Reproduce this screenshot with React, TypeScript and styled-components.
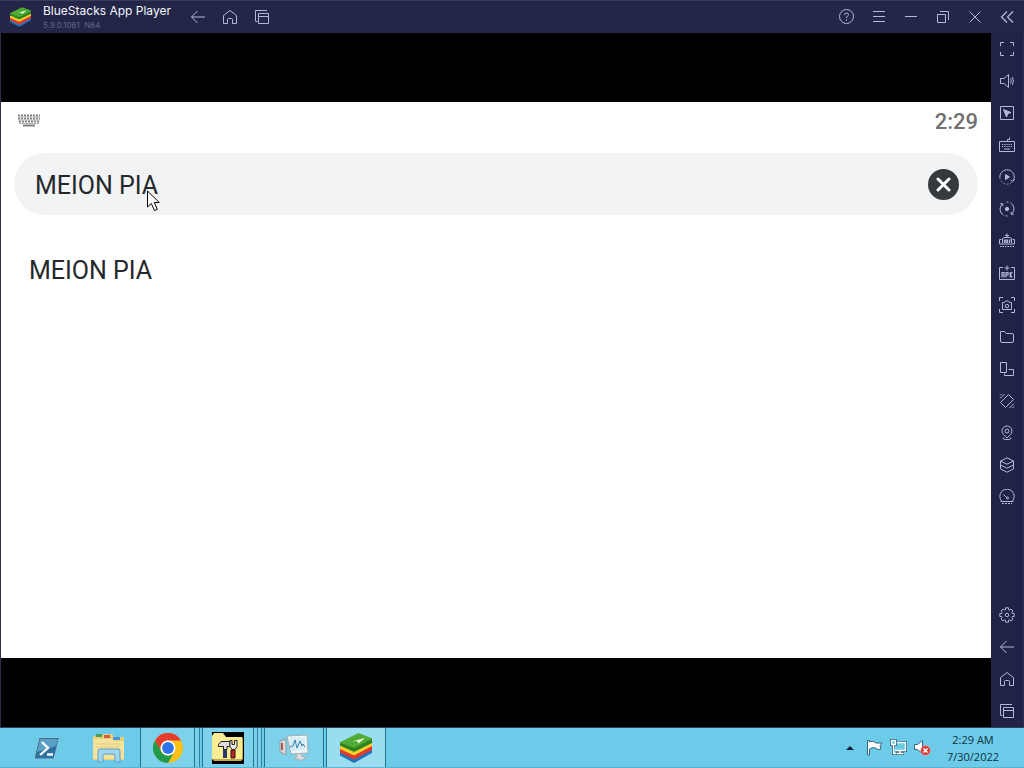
import React, { useState } from "react";
import styled, { createGlobalStyle } from "styled-components";

const GlobalStyle = createGlobalStyle`
  * { box-sizing: border-box; }
  html, body { margin: 0; background: #000; }
  button { font: inherit; color: inherit; background: none; border: 0; padding: 0; cursor: default; }
`;

const Screen = styled.div`
  display: flex;
  flex-direction: column;
  min-height: 100vh;
`;

const TitleBar = styled.header`
  display: flex;
  align-items: flex-start;
  height: 33px;
  padding: 0 1px 0 10px;
  background: #232647;
  border-top: 1px solid #373b5c;
  color: #b4b7da;
`;

const AppLogo = styled.span`
  display: flex;
  align-items: center;
  width: 33px;
  height: 32px;
`;

const AppName = styled.div`
  width: 139px;
  padding-top: 2px;
  font-family: Inter, "Open Sans", sans-serif;
  white-space: nowrap;
`;

const Name = styled.h1`
  margin: 0;
  font-size: 12px;
  font-weight: 400;
  line-height: 16px;
  color: #f4f5fc;
`;

const Version = styled.p`
  margin: 0;
  font-size: 8px;
  line-height: 12px;
  white-space: pre;
  color: #62668c;
`;

const Group = styled.nav<{ $end?: boolean }>`
  display: flex;
  margin-left: ${(p) => (p.$end ? "auto" : "0")};
`;

const IconButton = styled.button`
  display: flex;
  align-items: center;
  justify-content: center;
  width: 32px;
  height: 32px;
`;

const Body = styled.div`
  display: flex;
  flex: 1;
`;

const Player = styled.main`
  display: flex;
  flex: 1;
  flex-direction: column;
  padding: 69px 0;
  background: #000;
  border-left: 1px solid #2b2d40;
`;

const Android = styled.section`
  flex: 1;
  padding: 0 13px;
  background: #fff;
  font-family: Roboto, sans-serif;
  color: #25282b;
`;

const StatusBar = styled.div`
  display: flex;
  align-items: center;
  justify-content: space-between;
  height: 38px;
  padding-left: 4px;
`;

const Clock = styled.time`
  font-size: 22px;
  font-weight: 500;
  color: #707070;
`;

const SearchForm = styled.form`
  position: relative;
  display: flex;
  align-items: center;
  height: 62px;
  margin-top: 13px;
  padding: 0 19px 0 21px;
  border-radius: 31px;
  background: #f1f3f4;
`;

const SearchInput = styled.input`
  flex: 1;
  min-width: 0;
  padding: 4px 0 0;
  border: 0;
  outline: 0;
  background: none;
  font-family: inherit;
  font-size: 25px;
  line-height: 32px;
  color: inherit;
`;

const ClearButton = styled.button`
  display: flex;
  align-items: center;
  justify-content: center;
  width: 31px;
  height: 31px;
  border-radius: 50%;
  background: #353a3d;
`;

const Cursor = styled.svg`
  position: absolute;
  left: 133px;
  top: 37px;
  pointer-events: none;
`;

const Results = styled.ul`
  margin: 40px 0 0;
  padding: 0 15px;
  list-style: none;
`;

const Result = styled.button`
  font-size: 25px;
  line-height: 32px;
`;

const SideBar = styled.aside`
  display: flex;
  flex-direction: column;
  justify-content: space-between;
  width: 33px;
  background: #202347;
  border-right: 1px solid #2b2e55;
  color: #b4b7da;
`;

const TaskBar = styled.footer`
  display: flex;
  height: 41px;
  padding-left: 17px;
  background: #6bcbe9;
  border-top: 1px solid #27435c;
  border-bottom: 1px solid #5db3cd;
`;

const Task = styled.button<{ $width: number; $state?: "open" | "active" }>`
  display: flex;
  align-items: center;
  justify-content: center;
  width: ${(p) => p.$width}px;
  border: solid #23728f;
  border-width: ${(p) => (p.$state ? "0 1px" : "0")};
  background: ${(p) => (p.$state === "active" ? "#9bddf0" : p.$state === "open" ? "#7dd1eb" : "none")};
`;

const Stack = styled.span<{ $width: number }>`
  width: ${(p) => p.$width}px;
  border-right: 1px solid #2f7f9d;
  background: #78cfea;
`;

const Spacer = styled.span`
  width: 2px;
`;

const Tray = styled.div`
  display: flex;
  align-items: center;
  margin-left: auto;
  padding-right: 24px;
  color: #10303f;
`;

const TrayButton = styled.button`
  display: flex;
  align-items: center;
  justify-content: center;
  width: 24px;
  height: 24px;
`;

const DateTime = styled.div`
  width: 54px;
  margin-left: 12px;
  font-family: "Open Sans", "Noto Sans", sans-serif;
  font-size: 11px;
  line-height: 17px;
  text-align: center;
  white-space: nowrap;
`;

const LineSvg = styled.svg`
  display: block;
  fill: none;
  stroke: currentColor;
  stroke-width: 1;
`;

const Line = ({ children }: { children: React.ReactNode }) => (
  <LineSvg width="16" height="16" viewBox="0 0 16 16" aria-hidden="true">
    {children}
  </LineSvg>
);

const icons: Record<string, React.ReactNode> = {
  back: <path d="M15 8H1.500M7.500 2l-6 6 6 6" />,
  home: <path d="M1.500 6.500 8 1.500l6.500 5V14.500h-4V10.500q0-1-1-1h-3q-1 0-1 1V14.500h-4z" />,
  recent: (
    <>
      <path d="M1.500 12V1.500H13M3.500 12.500H1.500" />
      <path d="M4.500 4.500h10v10h-10zM4.500 7.500h10" />
    </>
  ),
  help: (
    <>
      <circle cx="7.500" cy="7.500" r="7" />
      <path d="M5.500 6q0-2 2-2t2 1.700c0 1.500-2 1.400-2 3.300M7.500 10.300v1.400" />
    </>
  ),
  menu: <path d="M2 2.500h12M2 7.500h12M2 12.500h12" />,
  minimize: <path d="M2 7.500h12" />,
  restore: <path d="M2.500 5.500h8v8h-8zM5 2.500h8.500V11" />,
  close: <path d="m2.500 2.500 11 11M13.500 2.500l-11 11" />,
  collapse: <path d="m8 2.500-5.500 5.500 5.500 5.500M14 2.500l-5.500 5.500 5.500 5.500" strokeWidth="1.300" />,
  fullscreen: <path d="M1.500 5V1.500H5M11 1.500h3.500V5M14.500 11v3.500H11M5 14.500H1.500V11" />,
  volume: (
    <>
      <path d="M1.500 5.500H5l4.500-4v13l-4.500-4H1.500z" />
      <path d="M11.500 5.500q1.500 2.500 0 5M13.300 4q2.300 4 0 8" />
    </>
  ),
  lock: (
    <>
      <path d="M1.500 1.500h13v13h-13z" />
      <path d="m4.500 4.500 7.500 3-3.200 1.200L7.500 12z" fill="currentColor" />
    </>
  ),
  keyboard: (
    <>
      <path d="M.500 4.500h15v10H.500zM8.500 4V2.500h2V.500" />
      <path d="M3 7.500h10M3 9.500h10" strokeDasharray="1.200 1" />
      <path d="M5 12h6" />
    </>
  ),
  macro: (
    <>
      <path d="M1 9.500A7.200 7.200 0 1 1 14 12" />
      <path d="M12.500 13.500A7.200 7.200 0 0 1 1.200 10.500" strokeDasharray="1.500 1.800" />
      <path d="M6.500 5.500 10.500 8l-4 2.500z" fill="currentColor" />
      <path d="M15.500 10 13.800 12.500 11.500 11" />
    </>
  ),
  sync: (
    <>
      <path d="M3.300 3A7 7 0 0 0 4.500 14.200M12.700 13A7 7 0 0 0 11.500 1.800" />
      <path d="M6.500 14.900h2M7.500 1.100h2" />
      <path d="M1.300 2.700h2.500v2.500M14.700 13.300h-2.500v-2.500" />
      <circle cx="8" cy="8" r="1.700" fill="currentColor" />
    </>
  ),
  memory: (
    <>
      <path d="M2.500 6.500H.500v4.500h15V6.500h-2M3.500 10V5.500L5 4.500h6l1.500 1V10M8 4V.500M6 2.500h4" />
      <path d="M5.500 10V7h1.500v3M8.500 6.500V10M10.500 10V7h1" strokeWidth="1.200" />
      <path d="M1 13.500h14" strokeDasharray="1.500 1" />
    </>
  ),
  apk: (
    <>
      <path d="M4 2.500H.500v12H3M12 2.500h3.500v12H13M8 .500v5M5.500 3H10.500M3 14.500h10" />
      <path d="M3 12.500v-5h2v5M3 10h2M7 12.500v-5h2v2.500H7M11.200 7v5.500M13.300 7.200l-2 2.800 2 2.500" strokeWidth="1.200" />
    </>
  ),
  screenshot: (
    <>
      <path d="M.500 4V.500H4M12 .500h3.500V4M15.500 12v3.500H12M4 15.500H.500V12" />
      <path d="M3.500 5.500h2l1-1.500h3l1 1.500h2v7h-9z" />
      <circle cx="8" cy="9" r="1.700" />
    </>
  ),
  folder: <path d="M1.500 2.500h4l2 2h5.500q1.500 0 1.500 1.500v6q0 1.500-1.500 1.500H3q-1.500 0-1.500-1.500z" />,
  rotate: <path d="M1.500 1.500h6v10h-6zM9.500 8.500h5v6h-9v-2" />,
  shake: (
    <>
      <path d="M9.500 1.500 14.500 6.500 6.500 14.500 1.500 9.500z" />
      <path d="M1 5.500 5.500 1M1 2.500 2.500 1M10.500 15l4.500-4.500M13.500 15l1.500-1.500" />
    </>
  ),
  location: (
    <>
      <path d="M8 13 4.500 9.500a5 5 0 1 1 7 0zM4.500 12.500q-2 2 3.500 2t3.500-2" />
      <circle cx="8" cy="6" r="2" />
    </>
  ),
  layers: (
    <path d="M8 .800 14.500 4 8 7.200 1.500 4zM1.500 4v8L8 15.200l6.500-3.200V4M1.500 8 8 11.200 14.500 8" />
  ),
  gauge: (
    <>
      <path d="M3 12.500A7.200 7.200 0 1 1 13 12.500M1.500 12.500h13M8 9 4.500 5.500" />
      <path d="M3 14.500h10" strokeDasharray="2 1" />
      <circle cx="8.500" cy="9" r="1" />
    </>
  ),
  settings: (
    <>
      <path d="M6.500.800h3v1.900l1.200.500L12 1.900 14.100 4l-1.300 1.300.500 1.200h1.900v3h-1.900l-.500 1.200 1.300 1.300L12 14.100l-1.300-1.300-1.200.500v1.900h-3v-1.900l-1.200-.500L4 14.100 1.900 12l1.300-1.300-.500-1.200H.800v-3h1.900l.500-1.200L1.900 4 4 1.900l1.300 1.300 1.200-.500z" />
      <circle cx="8" cy="8" r="1.800" />
    </>
  ),
};

const ToolButton = ({ icon, label }: { icon: string; label: string }) => (
  <IconButton type="button" aria-label={label}>
    <Line>{icons[icon]}</Line>
  </IconButton>
);

const BlueStacksLogo = ({ width, height }: { width: number; height: number }) => (
  <svg width={width} height={height} viewBox="0 0 32 30" aria-hidden="true">
    <path d="M0 19 15 15 32 16.500V20L15 29.500q-1 .500-2 0L0 22.500z" fill="#2173bd" />
    <path d="M0 16 32 13v4L15 26q-1 .500-2 0L0 19.500z" fill="#e03a2c" />
    <path d="M0 13 32 10v3L15 22q-1 .500-2 0L0 16z" fill="#f8cf2a" />
    <path d="M0 9.500 18 2l14 4v4L15 18.500q-1 .500-2 0L0 12.500z" fill="#2b8420" />
    <path d="M.500 9 17.500.500q1-.500 2 0L31.500 5q1 .500 0 1.200L15 14.500q-1 .500-2 0L.500 10q-1-.500 0-1z" fill="#4fab35" />
    <path d="M12 8.500 25 5 18.500 10.500 17 8z" fill="#f2fbe9" />
  </svg>
);

const PowerShell = () => (
  <svg width="28" height="26" viewBox="0 0 28 26" aria-hidden="true">
    <path d="M6 2.500h20.500L21 24H1z" fill="#2e719f" stroke="#8cc6de" />
    <path d="M7 4h18l-2 7L4 17z" fill="#5b9fc6" />
    <path d="m9 7 6 6L7 20M14 19.500h6" fill="none" stroke="#fff" strokeWidth="2.300" />
  </svg>
);

const Explorer = () => (
  <svg width="34" height="30" viewBox="0 0 34 30" aria-hidden="true">
    <path d="M1 3h9l2-2h8l2 3h10v23H1z" fill="#e9cf76" />
    <path d="M4 1h6v3H4z" fill="#4c9c55" />
    <path d="M12 2h6v3h-6z" fill="#d65a4c" />
    <path d="M21 4h7v3h-7z" fill="#4e93d2" />
    <path d="M1 6h19l2 2h10v18H1z" fill="#f5e39d" />
    <path d="M4 11h25M4 14h25" stroke="#e5cf80" />
    <path d="M6 29V18q0-2 2-2h18q2 0 2 2v11h-5v-6q0-2-2-2h-8q-2 0-2 2v6z" fill="#a1d7ef" stroke="#5a9fc5" />
  </svg>
);

const Chrome = () => (
  <svg width="30" height="30" viewBox="0 0 30 30" aria-hidden="true">
    <circle cx="15" cy="15" r="15" fill="#fbc116" />
    <path d="M2 7.500A15 15 0 0 1 28 7.500H15a7.500 7.500 0 0 0-6.500 11.300z" fill="#e33b2e" />
    <path d="M2 7.500 8.500 18.800A7.500 7.500 0 0 0 21.500 18.800L15 30A15 15 0 0 1 2 7.500z" fill="#229a4c" />
    <circle cx="15" cy="15" r="7.500" fill="#fff" />
    <circle cx="15" cy="15" r="5.900" fill="#2f73e8" />
  </svg>
);

const ToolsFolder = () => (
  <svg width="32" height="32" viewBox="0 0 32 32" aria-hidden="true">
    <path d="M0 0h32v32H0z" fill="#000" />
    <path d="M0 4 2 1h9l3 4h16l1 2v20H0z" fill="#f8ec94" />
    <path d="M0 27h31l-2 2H2z" fill="#c7ab4b" />
    <path d="M30.500 7v20" stroke="#c7ab4b" />
    <path d="M11 14h4v12h-4z" fill="#28376b" />
    <path d="M19 18h4v8h-4z" fill="#b62922" stroke="#3a1212" />
    <path d="M6.500 12.500 9 9.500h9v5h-3v3h-3.500v-3h-5z" fill="#ddd" stroke="#222" />
    <path d="M18 8.500h2v4h2.500v-4h2.500v6l-2 3h-3l-2-3z" fill="#eee" stroke="#222" />
  </svg>
);

const Monitor = () => (
  <svg width="30" height="28" viewBox="0 0 30 28" aria-hidden="true">
    <path d="M1 7 7 5v16l-6-3z" fill="#ddd4d3" stroke="#8c9ba4" />
    <path d="M3 9v7" stroke="#a85d55" strokeWidth="2" />
    <path d="m8 2 20-1 1 18-17 1z" fill="#eff4f5" stroke="#a6b0b4" />
    <path d="m10 4 16-1 .500 13-14.500 1z" fill="#d5edf6" />
    <path d="m11 13 3-1 2-6 2 8 3-7 2 5 1-2 2 3" fill="none" stroke="#397fa9" />
    <path d="m17 20 5-.500 1 3 5 1-6 3-7-2.500 3-1.500z" fill="#d9dddd" stroke="#a6b0b4" />
  </svg>
);

const leftTools = [["back", "Back"], ["home", "Home"], ["recent", "Recent apps"]];
const windowTools = [
  ["help", "Help"], ["menu", "Menu"], ["minimize", "Minimize"],
  ["restore", "Restore"], ["close", "Close"], ["collapse", "Collapse sidebar"],
];
const sideTools = [
  ["fullscreen", "Full screen"], ["volume", "Volume"], ["lock", "Lock cursor"],
  ["keyboard", "Game controls"], ["macro", "Macro recorder"], ["sync", "Sync operations"],
  ["memory", "Trim memory"], ["apk", "Install APK"], ["screenshot", "Screenshot"],
  ["folder", "Media folder"], ["rotate", "Rotate"], ["shake", "Shake"],
  ["location", "Set location"], ["layers", "Multi-instance manager"], ["gauge", "Eco mode"],
];
const bottomTools = [["settings", "Settings"], ...leftTools];

const renderTools = (tools: string[][]) =>
  tools.map(([icon, label]) => <ToolButton key={icon} icon={icon} label={label} />);

export default function App() {
  const [query, setQuery] = useState("MEION PIA");

  return (
    <>
      <GlobalStyle />
      <Screen>
        <TitleBar>
          <AppLogo>
            <BlueStacksLogo width={21} height={20} />
          </AppLogo>
          <AppName>
            <Name>BlueStacks App Player</Name>
            <Version>{"5.9.0.1061  N64"}</Version>
          </AppName>
          <Group aria-label="Navigation">{renderTools(leftTools)}</Group>
          <Group $end aria-label="Window">{renderTools(windowTools)}</Group>
        </TitleBar>

        <Body>
          <Player>
            <Android>
              <StatusBar>
                <svg width="22" height="14" viewBox="0 0 22 14" fill="none" stroke="#808080" aria-hidden="true">
                  <path d="M0 1.500h22M0 4.500h22M1 7.500h20" strokeWidth="2" strokeDasharray="2 1" />
                  <path d="M0 3h22M0 6h22M1 9.500h20" stroke="#b5b5b5" />
                  <path d="M5 11.500h12" strokeWidth="2" />
                </svg>
                <Clock>2:29</Clock>
              </StatusBar>
              <SearchForm onSubmit={(e) => e.preventDefault()}>
                <SearchInput
                  type="text"
                  aria-label="Search"
                  value={query}
                  onChange={(e) => setQuery(e.target.value)}
                />
                <ClearButton type="button" aria-label="Clear search" onClick={() => setQuery("")}>
                  <svg width="15" height="15" viewBox="0 0 15 15" aria-hidden="true">
                    <path d="m2 2 11 11M13 2 2 13" stroke="#fff" strokeWidth="3" strokeLinecap="round" />
                  </svg>
                </ClearButton>
                <Cursor width="13" height="22" viewBox="0 0 13 22" aria-hidden="true">
                  <path d="M.500 1v16l3.800-3.500L7.500 20.500l2.800-1.200L7.300 12.500h5z" fill="#fff" stroke="#000" />
                </Cursor>
              </SearchForm>
              <Results>
                <li>
                  <Result type="button">MEION PIA</Result>
                </li>
              </Results>
            </Android>
          </Player>
          <SideBar>
            <div>{renderTools(sideTools)}</div>
            <div>{renderTools(bottomTools)}</div>
          </SideBar>
        </Body>

        <TaskBar>
          <Task type="button" $width={60} aria-label="PowerShell"><PowerShell /></Task>
          <Task type="button" $width={63} aria-label="File Explorer"><Explorer /></Task>
          <Task type="button" $width={55} $state="open" aria-label="Chrome"><Chrome /></Task>
          <Stack $width={5} />
          <Spacer />
          <Task type="button" $width={52} $state="open" aria-label="Tools"><ToolsFolder /></Task>
          <Stack $width={4} />
          <Stack $width={4} />
          <Spacer />
          <Task type="button" $width={60} $state="open" aria-label="Resource Monitor"><Monitor /></Task>
          <Spacer />
          <Task type="button" $width={60} $state="active" aria-label="BlueStacks">
            <BlueStacksLogo width={32} height={30} />
          </Task>
          <Tray>
            <TrayButton type="button" aria-label="Show hidden icons">
              <svg width="8" height="4" viewBox="0 0 8 4" aria-hidden="true">
                <path d="M4 0 8 4H0z" fill="#10203c" />
              </svg>
            </TrayButton>
            <TrayButton type="button" aria-label="Action Center">
              <svg width="17" height="17" viewBox="0 0 17 17" aria-hidden="true">
                <path d="M1.500 1.500h2V3q3-1.500 5 0t2 1h5.500l-2 3 1 3q-3 1.500-5-.500T3.500 10v6h-2z" fill="#fff" stroke="#35657b" />
              </svg>
            </TrayButton>
            <TrayButton type="button" aria-label="Network">
              <svg width="17" height="17" viewBox="0 0 17 17" aria-hidden="true">
                <path d="M4.500 3.500h11v8h-11zM10 12v2.500M6 14.500h8" fill="none" stroke="#35657b" strokeWidth="3" />
                <path d="M4.500 3.500h11v8h-11zM10 12v2.500M6.500 14.500h7" fill="#6bcbe9" stroke="#fff" strokeWidth="1.300" />
                <path d="M1.500 1.500h4v4h-4zM3.500 6v8.500H6" fill="#6bcbe9" stroke="#35657b" strokeWidth="3" />
                <path d="M1.500 1.500h4v4h-4zM3.500 6v8.500H6" fill="#6bcbe9" stroke="#fff" strokeWidth="1.300" />
              </svg>
            </TrayButton>
            <TrayButton type="button" aria-label="Volume muted">
              <svg width="18" height="17" viewBox="0 0 18 17" aria-hidden="true">
                <path d="M1.500 5.500h3l5-4v13l-5-4h-3z" fill="#fff" stroke="#35657b" />
                <circle cx="12.500" cy="11.500" r="4.900" fill="#dc3b38" stroke="#f4c9c6" strokeWidth=".500" />
                <path d="m10.500 9.500 4 4M14.500 9.500l-4 4" stroke="#fff" strokeWidth="1.500" />
              </svg>
            </TrayButton>
            <DateTime>
              <div>2:29 AM</div>
              <div>7/30/2022</div>
            </DateTime>
          </Tray>
        </TaskBar>
      </Screen>
    </>
  );
}
